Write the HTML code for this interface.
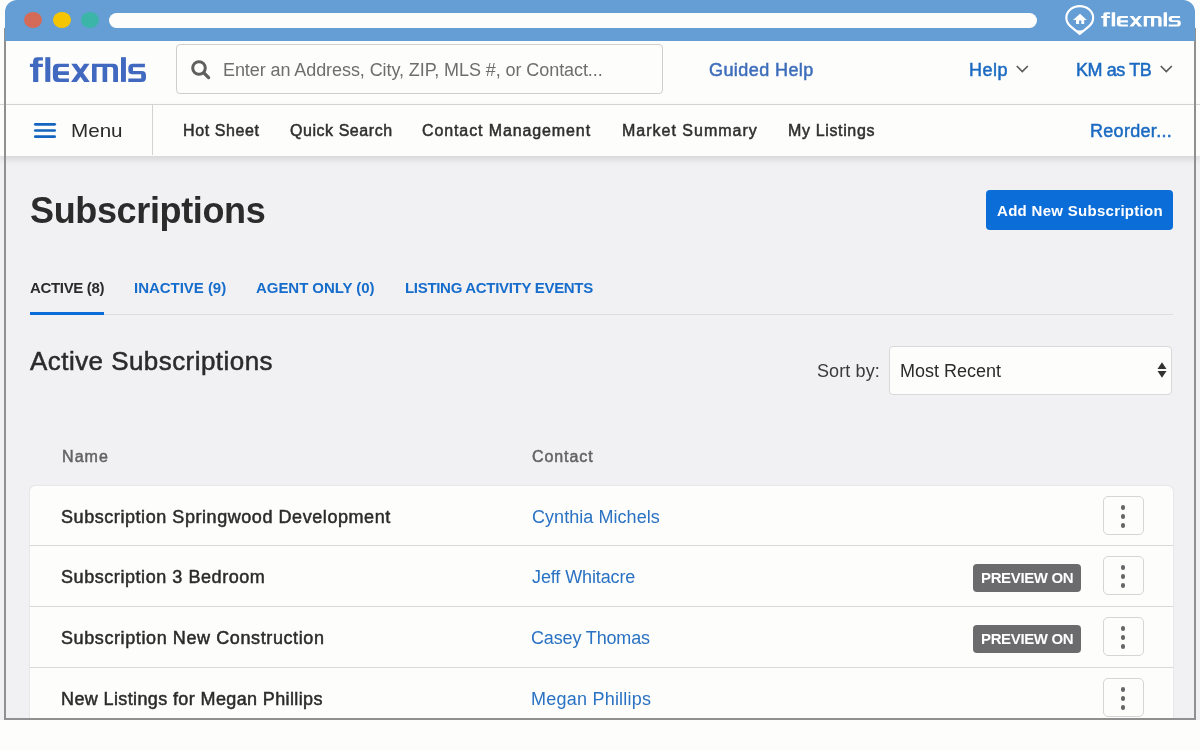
<!DOCTYPE html>
<html><head><meta charset="utf-8">
<style>
*{box-sizing:border-box;margin:0;padding:0}
html,body{width:1200px;height:751px;overflow:hidden;background:#fdfdfb;font-family:"Liberation Sans",sans-serif;color:#2b2b2b}
body{position:relative}
.a{position:absolute;white-space:nowrap}
.t{line-height:1;will-change:transform}
.b{font-weight:bold}
.nv{top:123px;font-size:16px;color:#2f2f2f;-webkit-text-stroke-width:0.5px}
.sb{-webkit-text-stroke-width:0.5px}
.tab{top:280px;font-size:15px;font-weight:bold;color:#176dcc}
.rn{font-size:18px;color:#2b2b2b;left:61px;-webkit-text-stroke-width:0.5px}
.ct{font-size:18px;color:#2a72c3;left:531px}
.kb{left:1103px;width:41px;height:39px;border:1px solid #d5d5d8;border-radius:5px;background:#fdfdfb}
.kb i{position:absolute;left:16.75px;width:4.6px;height:4.6px;border-radius:50%;background:#666668}
.bd{left:973px;width:108px;height:28px;border-radius:4px;background:#6b6b6e}
.bd span{will-change:transform;position:absolute;left:7.75px;top:6px;font-size:15px;font-weight:bold;color:#fff;letter-spacing:-0.36px;line-height:1}
.hl{left:30px;width:1143px;height:1px;background:#d9d9dc}
.dot{position:absolute;width:18px;height:16px;border-radius:50%;top:12px}
</style></head><body>
<!-- page background -->
<div class="a" style="left:0;top:41px;width:1200px;height:679px;background:#f1f1f3"></div>
<!-- header -->
<div class="a" style="left:0;top:41px;width:1200px;height:64px;background:#fdfdfb;border-bottom:1px solid #d9d9d9"></div>
<!-- nav -->
<div class="a" style="left:0;top:105px;width:1200px;height:51px;background:#fdfdfb;box-shadow:0 3px 7px rgba(0,0,0,0.13)"></div>

<svg class="a" style="left:28px;top:55px" width="120" height="30" viewBox="28 55 120 30">
  <g fill="#4169c0">
  <path d="M33.1,81.9 V61.5 Q33.1,57.2 37.4,57.2 H42.9 V60.5 H39.5 Q38.3,60.5 38.3,61.7 V63.75 H42.9 V67 H38.3 V81.9 Z M29.9,63.75 H33.1 V67 H29.9 Z"/>
  <rect x="45.3" y="57.2" width="5" height="24.7"/>
  <path d="M68.9,63.75 H57.9 Q52.9,63.75 52.9,68.75 V76.9 Q52.9,81.9 57.9,81.9 H68.9 V78.6 H60 Q58,78.6 58,76.6 V74.9 H68.9 V71.3 H58 V69 Q58,67 60,67 H68.9 Z"/>
  <path d="M71.2,63.7 H76.7 L89.8,81.9 H84.2 Z M84.2,63.7 H89.5 L76.7,81.9 H71 Z"/>
  <path d="M92,81.9 V63.75 H113 Q118,63.75 118,68.75 V81.9 H113.2 V69 Q113.2,67 111.2,67 H107.2 V81.9 H102.6 V67 H96.6 V81.9 Z"/>
  <rect x="121" y="57.2" width="4.9" height="24.7"/>
  <path d="M144.9,63.75 H132.8 Q128.3,63.75 128.3,68.25 V70 Q128.3,74.3 132.6,74.3 H141.2 V78.6 H128.3 V81.9 H141.5 Q146,81.9 146,77.4 V75.3 Q146,71 141.7,71 H133 V67.3 H144.9 Z"/>
  </g>
</svg>
<div class="a" style="left:176px;top:44px;width:487px;height:50px;border:1px solid #cfcfcf;border-radius:4px;background:#fdfdfb"></div>
<svg class="a" style="left:185px;top:56px" width="30" height="30" viewBox="185 56 30 30">
  <circle cx="199" cy="68" r="6.3" fill="none" stroke="#5f5f5f" stroke-width="3"/>
  <line x1="204" y1="73" x2="208.6" y2="77.6" stroke="#5f5f5f" stroke-width="3.2" stroke-linecap="round"/>
</svg>
<div class="a t" style="left:223px;top:61px;font-size:18px;color:#6e6e6e;letter-spacing:-0.08px">Enter an Address, City, ZIP, MLS #, or Contact...</div>
<div class="a t sb" style="left:709px;top:61px;font-size:18px;color:#3d6dbb;letter-spacing:0.42px">Guided Help</div>
<div class="a t sb" style="left:969.4px;top:61px;font-size:18px;color:#1b6ac2;letter-spacing:0.5px">Help</div>
<svg class="a" style="left:1014px;top:63px" width="16" height="12" viewBox="0 0 16 12"><path d="M2.8,3 L8.3,8.6 L13.8,3" fill="none" stroke="#5a5a5a" stroke-width="1.7"/></svg>
<div class="a t sb" style="left:1075.6px;top:61px;font-size:18px;color:#1b6ac2;letter-spacing:-0.41px">KM as TB</div>
<svg class="a" style="left:1158px;top:63px" width="16" height="12" viewBox="0 0 16 12"><path d="M2.8,3 L8.3,8.6 L13.8,3" fill="none" stroke="#5a5a5a" stroke-width="1.7"/></svg>

<svg class="a" style="left:28px;top:115px" width="40" height="30" viewBox="28 115 40 30">
  <g stroke="#1565c0" stroke-width="2.7" stroke-linecap="round">
  <line x1="35.3" y1="124.3" x2="54.7" y2="124.3"/>
  <line x1="35.3" y1="130.5" x2="54.7" y2="130.5"/>
  <line x1="35.3" y1="136.7" x2="54.7" y2="136.7"/>
  </g>
</svg>
<div class="a t" style="left:70.5px;top:121px;font-size:19px;color:#2b2b2b;transform:scaleX(1.085);transform-origin:0 0">Menu</div>
<div class="a" style="left:152px;top:105px;width:1px;height:50px;background:#d3d3d3"></div>
<div class="a t nv" style="left:183.25px;letter-spacing:0.6px">Hot Sheet</div>
<div class="a t nv" style="left:290.25px;letter-spacing:0.55px">Quick Search</div>
<div class="a t nv" style="left:422px;letter-spacing:0.89px">Contact Management</div>
<div class="a t nv" style="left:621.7px;letter-spacing:1.0px">Market Summary</div>
<div class="a t nv" style="left:787.8px;letter-spacing:0.64px">My Listings</div>
<div class="a t sb" style="left:1089.8px;top:122px;font-size:18px;color:#1b6ac2;letter-spacing:0.3px">Reorder...</div>

<!-- content -->
<div class="a t b" style="left:30.3px;top:193px;font-size:36px;color:#2b2b2b;letter-spacing:-0.36px">Subscriptions</div>
<div class="a" style="left:986px;top:190px;width:187px;height:40px;border-radius:4px;background:#0b6dd7"></div>
<div class="a t b" style="left:997px;top:203px;font-size:15px;color:#fff;letter-spacing:0.3px">Add New Subscription</div>

<div class="a t tab" style="left:30.1px;color:#2b2b2b;letter-spacing:-0.34px">ACTIVE (8)</div>
<div class="a t tab" style="left:133.6px;letter-spacing:-0.03px">INACTIVE (9)</div>
<div class="a t tab" style="left:256px;letter-spacing:-0.05px">AGENT ONLY (0)</div>
<div class="a t tab" style="left:404.6px;letter-spacing:-0.31px">LISTING ACTIVITY EVENTS</div>
<div class="a hl" style="top:314px;background:#dedddb"></div>
<div class="a" style="left:30px;top:312px;width:74px;height:3px;background:#0b6dd7"></div>

<div class="a t" style="left:30.2px;top:349px;font-size:25px;color:#2b2b2b;letter-spacing:0.45px;-webkit-text-stroke-width:0.5px;transform:scaleX(1.038);transform-origin:0 0">Active Subscriptions</div>
<div class="a t" style="left:816.5px;top:362px;font-size:18px;color:#3a3a3a;letter-spacing:0.11px">Sort by:</div>
<div class="a" style="left:889px;top:346px;width:283px;height:49px;border:1px solid #d8d8da;border-radius:4px;background:#fdfdfb"></div>
<div class="a t" style="left:900.3px;top:362px;font-size:18px;color:#2b2b2b">Most Recent</div>
<svg class="a" style="left:1155px;top:360px" width="14" height="20" viewBox="0 0 14 20"><path d="M2.5,9 L7,2.2 L11.5,9 Z M2.5,11 L7,17.8 L11.5,11 Z" fill="#333"/></svg>

<div class="a t sb" style="left:61.75px;top:449px;font-size:16px;color:#636363;letter-spacing:1.08px">Name</div>
<div class="a t sb" style="left:531.5px;top:449px;font-size:16px;color:#636363;letter-spacing:0.92px">Contact</div>

<div class="a" style="left:30px;top:486px;width:1143px;height:300px;border-radius:5px;background:#fdfdfb;box-shadow:0 0 1.5px rgba(0,0,0,0.2)"></div>
<div class="a hl" style="top:545px"></div>
<div class="a hl" style="top:606px"></div>
<div class="a hl" style="top:667px"></div>

<div class="a t rn" style="top:508px;letter-spacing:0.56px">Subscription Springwood Development</div>
<div class="a t rn" style="top:568px;letter-spacing:0.56px">Subscription 3 Bedroom</div>
<div class="a t rn" style="top:629px;letter-spacing:0.6px">Subscription New Construction</div>
<div class="a t rn" style="top:690px;letter-spacing:0.38px">New Listings for Megan Phillips</div>

<div class="a t ct" style="top:508px;left:531.9px;letter-spacing:0.05px">Cynthia Michels</div>
<div class="a t ct" style="top:568px;left:531.7px;letter-spacing:-0.11px">Jeff Whitacre</div>
<div class="a t ct" style="top:629px;left:530.7px;letter-spacing:-0.15px">Casey Thomas</div>
<div class="a t ct" style="top:690px;left:530.7px;letter-spacing:0.23px">Megan Phillips</div>

<div class="a bd" style="top:564px"><span>PREVIEW ON</span></div>
<div class="a bd" style="top:625px"><span>PREVIEW ON</span></div>

<div class="a kb" style="top:496px"><i style="top:8.2px"></i><i style="top:17.1px"></i><i style="top:26px"></i></div>
<div class="a kb" style="top:556px"><i style="top:8.2px"></i><i style="top:17.1px"></i><i style="top:26px"></i></div>
<div class="a kb" style="top:617px"><i style="top:8.2px"></i><i style="top:17.1px"></i><i style="top:26px"></i></div>
<div class="a kb" style="top:678px"><i style="top:8.2px"></i><i style="top:17.1px"></i><i style="top:26px"></i></div>

<!-- below frame -->
<div class="a" style="left:0;top:720px;width:1200px;height:31px;background:#fdfdfb"></div>
<div class="a" style="left:0;top:0;width:1200px;height:41px;background:#fdfdfb"></div>
<!-- frame border -->
<div class="a" style="left:4px;top:28px;width:2px;height:692px;background:#909090"></div>
<div class="a" style="left:1194px;top:28px;width:2px;height:692px;background:#909090"></div>
<div class="a" style="left:4px;top:718px;width:1192px;height:2px;background:#909090"></div>
<!-- top bar -->
<div class="a" style="left:5px;top:0;width:1190px;height:41px;background:#649ed4;border-radius:12px 12px 0 0">
  <div class="dot" style="left:19px;background:#d46b58"></div>
  <div class="dot" style="left:48px;background:#f4c500"></div>
  <div class="dot" style="left:76px;background:#3bb5a8"></div>
  <svg style="position:absolute;left:-5px;top:0" width="1200" height="41" viewBox="0 0 1200 41">
    <path d="M1070.3,26.1 A13.4,11.7 0 1 1 1089.2,26.1 L1079.75,34 Z" fill="none" stroke="#fff" stroke-width="2.2" stroke-linejoin="round"/>
    <path d="M1074,29.2 L1079.75,34.6 L1085.5,29.2 Q1079.75,31.6 1074,29.2 Z" fill="#fff"/>
    <path d="M1073,20 L1080,13.8 L1086.8,20 Z M1076,19.5 H1084.2 V24 H1081.3 V20.5 H1079.1 V24 H1076 Z" fill="#fff"/>
    <g fill="#fff" transform="translate(1080.614,-20.353) scale(0.6862,0.5709)">
  <path d="M33.1,81.9 V61.5 Q33.1,57.2 37.4,57.2 H42.9 V60.5 H39.5 Q38.3,60.5 38.3,61.7 V63.75 H42.9 V67 H38.3 V81.9 Z M29.9,63.75 H33.1 V67 H29.9 Z"/>
  <rect x="45.3" y="57.2" width="5" height="24.7"/>
  <path d="M68.9,63.75 H57.9 Q52.9,63.75 52.9,68.75 V76.9 Q52.9,81.9 57.9,81.9 H68.9 V78.6 H60 Q58,78.6 58,76.6 V74.9 H68.9 V71.3 H58 V69 Q58,67 60,67 H68.9 Z"/>
  <path d="M71.2,63.7 H76.7 L89.8,81.9 H84.2 Z M84.2,63.7 H89.5 L76.7,81.9 H71 Z"/>
  <path d="M92,81.9 V63.75 H113 Q118,63.75 118,68.75 V81.9 H113.2 V69 Q113.2,67 111.2,67 H107.2 V81.9 H102.6 V67 H96.6 V81.9 Z"/>
  <rect x="121" y="57.2" width="4.9" height="24.7"/>
  <path d="M144.9,63.75 H132.8 Q128.3,63.75 128.3,68.25 V70 Q128.3,74.3 132.6,74.3 H141.2 V78.6 H128.3 V81.9 H141.5 Q146,81.9 146,77.4 V75.3 Q146,71 141.7,71 H133 V67.3 H144.9 Z"/>
  </g>
  </svg>
  <div style="position:absolute;left:104px;top:13px;width:928px;height:15px;border-radius:8px;background:#fdfdfb"></div>
</div>
</body></html>
